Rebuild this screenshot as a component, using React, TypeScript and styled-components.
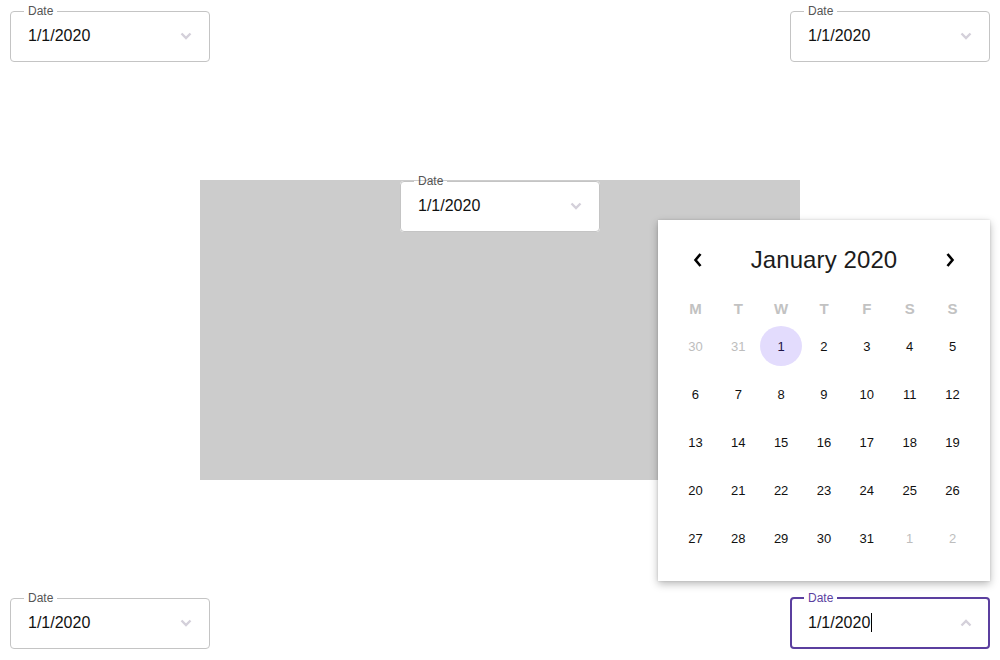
import React from "react";
import styled, { createGlobalStyle } from "styled-components";

const Global = createGlobalStyle`
  html, body { margin: 0; padding: 0; background: #fff; }
  body { font-family: "Liberation Sans", Arial, Helvetica, sans-serif; }
  * { box-sizing: border-box; }
`;

const Page = styled.div`
  height: 660px;
  padding: 0 10px;
  display: grid;
  grid-template-rows: 1fr 300px 1fr;
`;

const Row = styled.div<{ $bottom?: boolean }>`
  display: flex;
  justify-content: space-between;
  align-items: ${(p) => (p.$bottom ? "flex-end" : "flex-start")};
  padding: ${(p) => (p.$bottom ? "0 0 11px" : "4px 0 0")};
`;

const Stage = styled.div`
  display: flex;
  justify-content: center;
`;

const GrayBox = styled.div`
  width: 600px;
  height: 300px;
  background: #cccccc;
  display: flex;
  justify-content: center;
  align-items: flex-start;
`;

const Anchor = styled.div<{ $lift?: boolean }>`
  position: relative;
  width: 200px;
  margin-top: ${(p) => (p.$lift ? "-6px" : "0")};
`;

const Fieldset = styled.fieldset<{ $focused?: boolean }>`
  margin: 0;
  min-width: 0;
  width: 200px;
  padding: ${(p) => (p.$focused ? "0 12px 8px" : "0 13px 9px")};
  border: ${(p) => (p.$focused ? "2px solid #5b3f9f" : "1px solid #c4c4c4")};
  border-radius: 4px;
  background: #fff;
`;

const Legend = styled.legend<{ $focused?: boolean }>`
  padding: 0 4px;
  font-size: 12px;
  line-height: 14px;
  color: ${(p) => (p.$focused ? "#5b3f9f" : "#555")};
`;

const InputRow = styled.div`
  height: 34px;
  padding: 1px 4px 0;
  display: flex;
  align-items: center;
`;

const Value = styled.div`
  flex: 1;
  display: flex;
  align-items: center;
  font-size: 16px;
  color: #111;
`;

const Caret = styled.span`
  display: inline-block;
  width: 1px;
  height: 19px;
  background: #000;
  margin-left: 1px;
`;

const Popup = styled.div`
  position: absolute;
  right: 0;
  bottom: calc(100% + 10px);
  width: 332px;
  padding: 20px 16px 23px;
  background: #fff;
  box-shadow: 0 3px 8px rgba(0, 0, 0, 0.28), 0 0 2px rgba(0, 0, 0, 0.12);
  z-index: 10;
`;

const Header = styled.div`
  height: 40px;
  display: grid;
  grid-template-columns: 48px 1fr 48px;
  align-items: center;
  margin-bottom: 12px;
`;

const NavButton = styled.button`
  height: 40px;
  border: 0;
  background: transparent;
  padding: 0;
  display: flex;
  align-items: center;
  justify-content: center;
  cursor: pointer;
`;

const Title = styled.div`
  text-align: center;
  font-size: 24px;
  font-weight: 300;
  color: #1c1c1c;
  letter-spacing: 0.1px;
`;

const WeekRow = styled.div`
  display: grid;
  grid-template-columns: repeat(7, 1fr);
  height: 32px;
  margin-bottom: 2px;
`;

const WeekDay = styled.div`
  display: flex;
  align-items: center;
  justify-content: center;
  font-size: 15px;
  font-weight: 700;
  color: #c2c2c2;
`;

const DayGrid = styled.div`
  display: grid;
  grid-template-columns: repeat(7, 1fr);
  grid-auto-rows: 40px;
  row-gap: 8px;
`;

const DayCell = styled.div`
  display: flex;
  align-items: center;
  justify-content: center;
`;

const Day = styled.div<{ $muted?: boolean; $selected?: boolean }>`
  width: 42px;
  height: 40px;
  border-radius: 50%;
  display: flex;
  align-items: center;
  justify-content: center;
  font-size: 13px;
  color: ${(p) => (p.$muted ? "#bdbdbd" : p.$selected ? "#1e1446" : "#111")};
  background: ${(p) => (p.$selected ? "#e3dcfd" : "transparent")};
`;

const Chevron = ({ up }: { up?: boolean }) => (
  <svg width="12" height="8" viewBox="0 0 12 8" fill="none">
    <polyline
      points={up ? "1.5,6.5 6,2 10.5,6.5" : "1.5,1.5 6,6 10.5,1.5"}
      stroke="#d4d0da"
      strokeWidth="2.4"
      strokeLinejoin="miter"
    />
  </svg>
);

const NavIcon = ({ dir }: { dir: "prev" | "next" }) => (
  <svg width="10" height="16" viewBox="0 0 10 16" fill="none">
    <polyline
      points={dir === "prev" ? "7.5,2 2.5,8 7.5,14" : "2.5,2 7.5,8 2.5,14"}
      stroke="#000"
      strokeWidth="2.6"
      strokeLinejoin="miter"
    />
  </svg>
);

type DayItem = { n: number; muted?: boolean; selected?: boolean };

const days: DayItem[] = [
  { n: 30, muted: true },
  { n: 31, muted: true },
  { n: 1, selected: true },
  ...Array.from({ length: 30 }, (_, i) => ({ n: i + 2 })),
  { n: 1, muted: true },
  { n: 2, muted: true },
];

const Calendar = () => (
  <Popup>
    <Header>
      <NavButton aria-label="Previous month">
        <NavIcon dir="prev" />
      </NavButton>
      <Title>January 2020</Title>
      <NavButton aria-label="Next month">
        <NavIcon dir="next" />
      </NavButton>
    </Header>
    <WeekRow>
      {["M", "T", "W", "T", "F", "S", "S"].map((d, i) => (
        <WeekDay key={i}>{d}</WeekDay>
      ))}
    </WeekRow>
    <DayGrid>
      {days.map((d, i) => (
        <DayCell key={i}>
          <Day $muted={d.muted} $selected={d.selected}>
            {d.n}
          </Day>
        </DayCell>
      ))}
    </DayGrid>
  </Popup>
);

const DateField = ({
  focused,
  lift,
  open,
}: {
  focused?: boolean;
  lift?: boolean;
  open?: boolean;
}) => (
  <Anchor $lift={lift}>
    <Fieldset $focused={focused}>
      <Legend $focused={focused}>Date</Legend>
      <InputRow>
        <Value>
          1/1/2020
          {focused && <Caret />}
        </Value>
        <Chevron up={open} />
      </InputRow>
    </Fieldset>
    {open && <Calendar />}
  </Anchor>
);

export default function App() {
  return (
    <>
      <Global />
      <Page>
        <Row>
          <DateField />
          <DateField />
        </Row>
        <Stage>
          <GrayBox>
            <DateField lift />
          </GrayBox>
        </Stage>
        <Row $bottom>
          <DateField />
          <DateField focused open />
        </Row>
      </Page>
    </>
  );
}
